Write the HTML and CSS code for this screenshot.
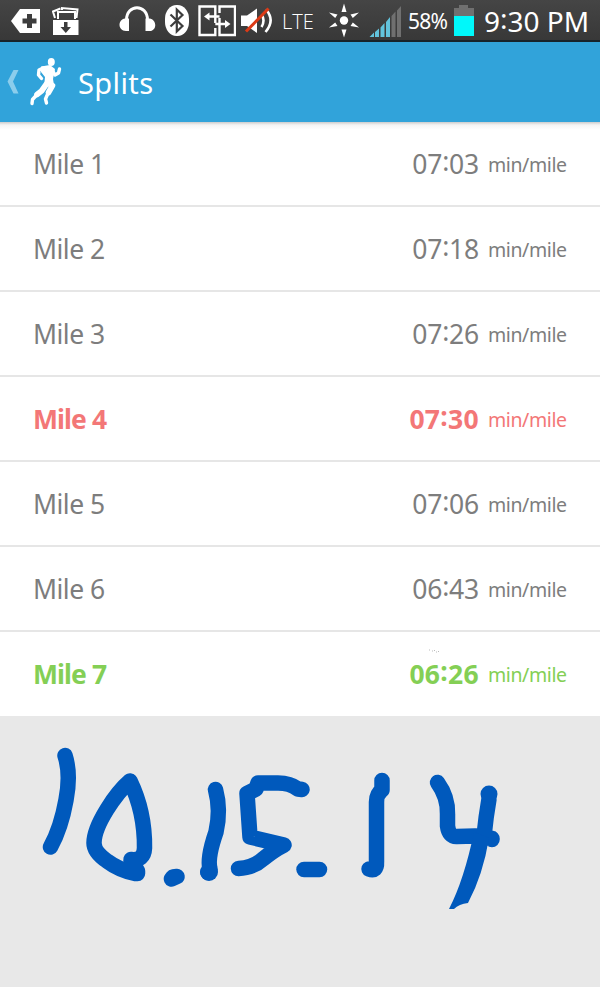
FILE: index.html
```html
<!DOCTYPE html>
<html lang="en">
<head>
    <meta charset="UTF-8">
    <meta name="viewport" content="width=device-width, initial-scale=1.0">
    <title>Splits</title>
    <link rel="stylesheet" href="styles.css">
</head>
<body>
    <div class="status-bar">
        <svg class="icon-back" width="30" height="42" viewBox="10 0 30 42">
            <path d="M11 21L20 9H40V33H20Z" fill="#fff"/>
            <path d="M29.500 14V28M22.500 21H36.500" stroke="#3d3d3d" stroke-width="5"/>
        </svg>
        <svg class="icon-download" width="28" height="42" viewBox="52 0 28 42">
            <path d="M53 20H78.500V35H53Z" fill="#fff"/>
            <path d="M55 18L53 11.500L60.500 8.500M62 10V8L77.500 9.500L76.500 18M58 19V12H75V19" fill="none" stroke="#fff" stroke-width="2"/>
            <path d="M64 22H67.500V27H71L65.800 33L60.500 27H64Z" fill="#3d3d3d"/>
        </svg>
        <svg class="icon-headphones" width="38" height="42" viewBox="119 0 38 42">
            <path d="M126.500 21V20C126.500 3.500 147.500 3.500 147.500 20V21" fill="none" stroke="#fff" stroke-width="3"/>
            <path d="M129 18.500V31H126C117.500 31 117.500 19.500 125 18.500ZM145.500 18.500V31H149C157.500 31 157 19.500 149.500 18.500Z" fill="#fff"/>
        </svg>
        <svg class="icon-bluetooth" width="24" height="42" viewBox="165 0 24 42">
            <rect x="165" y="5" width="24" height="31" rx="11.500" ry="14" fill="#fff"/>
            <path d="M170.500 14.500L182.500 26L176.800 31.500V9.500L182.500 15L170.500 26.500" fill="none" stroke="#3d3d3d" stroke-width="2.200"/>
        </svg>
        <svg class="icon-transfer" width="38" height="42" viewBox="198 0 38 42">
            <path d="M215.300 13V6.500H199.500V35H215.300V28M215.300 13V23M219.500 28V35H235V6.500H219.500V13M219.500 18V28" fill="none" stroke="#fff" stroke-width="2.400"/>
            <path d="M207 16.500H219.500M215.300 24H228" stroke="#fff" stroke-width="2.400"/>
            <path d="M204 16.500L209.500 12.500V20.500ZM230.500 24L225 20V28Z" fill="#fff"/>
        </svg>
        <svg class="icon-mute" width="34" height="42" viewBox="240 0 34 42">
            <path d="M241 15.500H247L257 8.500V33L247 26H241Z" fill="#fff"/>
            <path d="M261.500 14.500Q265.500 20.500 261.500 27M266 9.500Q275.500 20.500 265.500 32" fill="none" stroke="#fff" stroke-width="2.600"/>
            <path d="M246 31.500L268.500 8.500" stroke="#dc3a16" stroke-width="3"/>
        </svg>
        <span class="network">LTE</span>
        <svg class="icon-sun" width="32" height="42" viewBox="328 0 32 42">
            <circle cx="344" cy="20.500" r="4.200" fill="#fff"/>
            <path d="M344 3.500L346.500 12H341.500ZM344 37.500L346.500 29.500H341.500ZM329 12.500L337.500 14.500L335.200 18ZM359 12.500L350.500 14.500L352.800 18ZM329 27.500L337.500 26L335.200 22.500ZM359 27.500L350.500 26L352.800 22.500Z" fill="#fff"/>
        </svg>
        <svg class="icon-signal" width="33" height="42" viewBox="369 0 33 42">
            <path d="M369.500 37L374 32.500V37ZM375 32L379 28.500V37H375ZM380.500 27.500L384.500 23V37H380.500ZM386 22L390 17V37H386Z" fill="#62c3dc"/>
            <path d="M391.500 16L395.500 11.500V37H391.500ZM397 10.500L401 6V37H397Z" fill="#707070"/>
        </svg>
        <span class="battery-level">58%</span>
        <svg class="icon-battery" width="20" height="42" viewBox="454 0 20 42">
            <path d="M454 8H459V5H468V8H474V17H454Z" fill="#707070"/>
            <path d="M454 16H474V36H454Z" fill="#00f8fa"/>
        </svg>
        <span class="clock">9<span class="colon">:</span>30 PM</span>
    </div>

    <div class="header">
        <svg class="runner" width="62" height="80" viewBox="0 42 62 80">
            <path d="M13.500 70H18.500L13 81.500L18.500 93.500H13.500L7.500 81.500Z" fill="#8bcdec"/>
            <ellipse cx="51.300" cy="62" rx="3.500" ry="4" fill="#fff"/>
            <path d="M41 66.500L50 65L55 69L53 79L54 85L44 87L45 77L41 72Z" fill="#fff"/>
            <g class="limbs">
                <path d="M43 68L39 70L38.500 75L41.500 78.500"/>
                <path d="M52.500 70.500L55 75L58.500 73L59.500 69"/>
                <path class="thigh" d="M48 83.500L52.500 85.500L48.500 92.500"/>
                <path d="M48.500 92L45.500 99L46.500 103"/>
                <path class="thigh" d="M46.500 84L41.500 91L37 94.500"/>
                <path d="M37.500 94L32.500 99.500L32 103.500"/>
            </g>
        </svg>
        <span class="title">Splits</span>
    </div>

    <div class="splits">
        <div class="split">
            <span class="mile">Mile 1</span>
            <span class="time">07<span class="colon">:</span>03</span>
            <span class="unit">min/mile</span>
        </div>
        <div class="split">
            <span class="mile">Mile 2</span>
            <span class="time">07<span class="colon">:</span>18</span>
            <span class="unit">min/mile</span>
        </div>
        <div class="split">
            <span class="mile">Mile 3</span>
            <span class="time">07<span class="colon">:</span>26</span>
            <span class="unit">min/mile</span>
        </div>
        <div class="split slowest">
            <span class="mile">Mile 4</span>
            <span class="time">07<span class="colon">:</span>30</span>
            <span class="unit">min/mile</span>
        </div>
        <div class="split">
            <span class="mile">Mile 5</span>
            <span class="time">07<span class="colon">:</span>06</span>
            <span class="unit">min/mile</span>
        </div>
        <div class="split">
            <span class="mile">Mile 6</span>
            <span class="time">06<span class="colon">:</span>43</span>
            <span class="unit">min/mile</span>
        </div>
        <div class="split fastest">
            <span class="mile">Mile 7</span>
            <span class="time">06<span class="colon">:</span>26</span>
            <span class="unit">min/mile</span>
            <svg class="specks" width="12" height="5" viewBox="0 0 12 5">
                <path d="M1 1H2M4 2H5M6 1.500H7M8 3H9M10 2.500H11" stroke="#bbb"/>
            </svg>
        </div>
    </div>

    <div class="note">
        <!-- pen strokes -->
        <svg class="ink" width="600" height="271" viewBox="0 716 600 271">
            <path d="M65 755.500Q71 774 66 800Q61 828 50.500 847"/>
            <path d="M130 781C116 793 94 825 94 843Q94 852 107 861Q119 870 135 873.500H137.500V871L131 859.500Q144 861 144.500 848Q145 812 130 781"/>
            <path d="M171.500 879L173 877L177 876.500Z"/>
            <path d="M215.500 789.500Q221 810 216 832Q207 858 210 869L208 872.500"/>
            <circle class="ink-tail" cx="209" cy="872" r="9"/>
            <path d="M302 789.500L298 789Q290 783 278 783H258L256 789L247 793.500L250 837L284 845Q274 850 263 859Q253 868 238.500 868.500"/>
            <path d="M304 869.500H319.500"/>
            <path d="M382 780.500V790Q376.500 794 376.500 802V862Q377 872 369 869"/>
            <path d="M437.500 782.500Q448 797 447.500 814V826Q449 837 457 836.500L475 836L492 838.500V839.500"/>
            <path d="M489 799Q486 816 484 836"/>
            <path class="ink-tail" d="M474 832L489 838Q483 875 468 903Q459 904 454 909L449 909Q464 880 474 832Z"/>
            <circle class="ink-tail" cx="489" cy="794" r="8.500"/>
        </svg>
    </div>
</body>
</html>
```
FILE: styles.css
```css
body, html {
    margin: 0;
    padding: 0;
    font-family: "Noto Sans", sans-serif;
    background-color: #e8e8e8;
}

body {
    width: 600px;
    height: 987px;
    overflow: hidden;
}

svg {
    display: block;
    flex-shrink: 0;
}

.status-bar {
    display: flex;
    align-items: center;
    box-sizing: border-box;
    height: 42px;
    padding-left: 10px;
    color: #fff;
    background: linear-gradient(#454545, #383838);
    border-bottom: 2px solid #17232b;
    white-space: nowrap;
}

.status-bar svg {
    margin-bottom: -2px;
}

.icon-download {
    margin-left: 12px;
}

.icon-headphones {
    margin-left: 39px;
}

.icon-bluetooth {
    margin-left: 8px;
}

.icon-transfer {
    margin-left: 9px;
}

.icon-mute {
    margin-left: 4px;
}

.network {
    width: 46px;
    margin-left: 8px;
    box-sizing: border-box;
    font-family: "Open Sans", sans-serif;
    font-size: 20px;
    font-weight: 300;
    line-height: 40px;
    padding-top: 3px;
}

.icon-signal {
    margin-left: 9px;
}

.battery-level {
    width: 46px;
    margin-left: 6px;
    font-size: 21px;
    line-height: 40px;
    letter-spacing: -0.7px;
    padding-top: 2px;
}

.clock {
    margin-left: 10px;
    font-size: 28px;
    line-height: 40px;
    padding-top: 2px;
}

.colon {
    vertical-align: 3px;
    line-height: 0;
}

.header {
    display: flex;
    align-items: center;
    height: 80px;
    color: #fff;
    background-color: #31a3da;
}

.limbs {
    fill: none;
    stroke: #fff;
    stroke-width: 3.4px;
    stroke-linecap: round;
    stroke-linejoin: round;
}

.limbs .thigh {
    stroke-width: 5.6px;
}

.title {
    margin-left: 16px;
    font-size: 29px;
    letter-spacing: 0.4px;
}

.splits {
    height: 594px;
    background: linear-gradient(#ccc, #f4f4f4 3px, #fff 8px);
}

.split {
    position: relative;
    display: flex;
    align-items: baseline;
    box-sizing: border-box;
    height: 85px;
    padding: 24px 33px 0;
    line-height: 36px;
    color: #7d7d7d;
    border-bottom: 2px solid #e6e6e6;
}

.split:last-child {
    height: 84px;
    border-bottom: none;
}

.mile {
    font-size: 26.5px;
    letter-spacing: -0.5px;
}

.time {
    margin-left: auto;
    font-size: 26.5px;
    letter-spacing: -0.2px;
}

.unit {
    width: 79px;
    margin-left: 9px;
    font-size: 19.5px;
    letter-spacing: -0.4px;
    transform: translateY(-2px);
}

.slowest {
    color: #f37777;
}

.fastest {
    color: #84cf55;
}

.slowest .mile, .fastest .mile {
    font-weight: bold;
    letter-spacing: -0.9px;
}

.slowest .time, .fastest .time {
    font-weight: bold;
    letter-spacing: 0.3px;
}

.specks {
    position: absolute;
    top: 17px;
    left: 428px;
}

.note {
    height: 271px;
    background-color: #e8e8e8;
}

.ink {
    fill: none;
    stroke: #0059bc;
    stroke-width: 15.5px;
    stroke-linecap: round;
    stroke-linejoin: round;
}

.ink-tail {
    fill: #0059bc;
    stroke: none;
}
```
